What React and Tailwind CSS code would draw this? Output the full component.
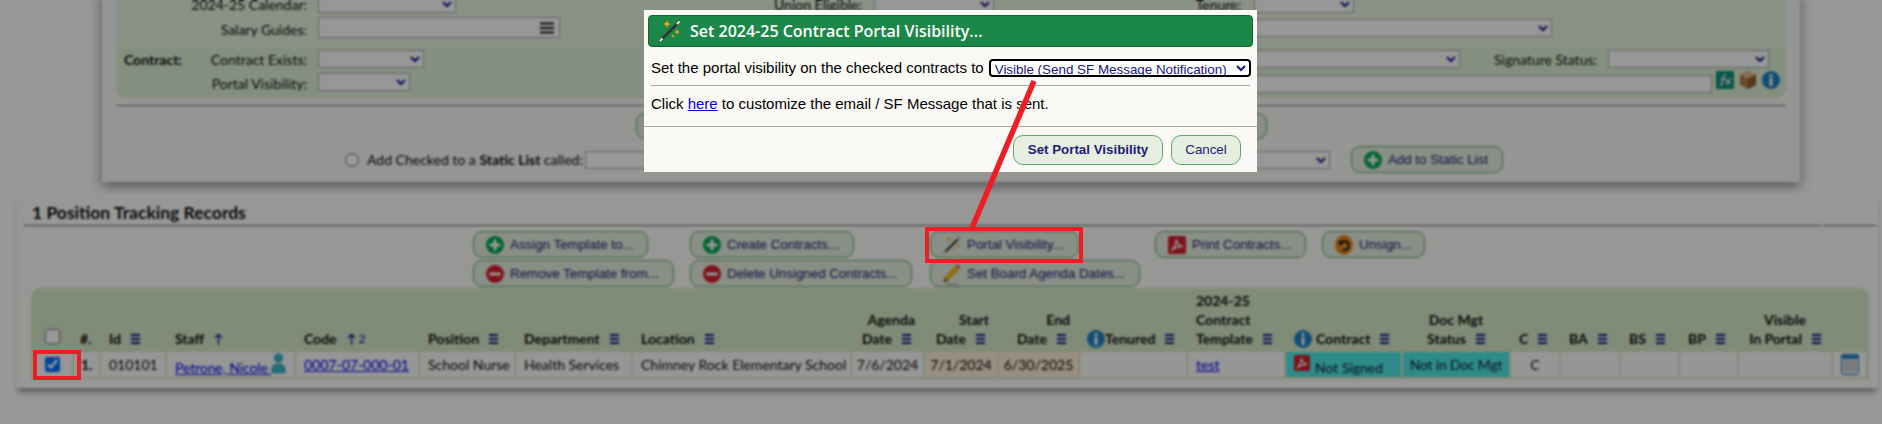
import React from "react";

const Plus = () => (
  <svg width="18" height="18" viewBox="0 0 18 18" className="shrink-0">
    <circle cx="9" cy="9" r="9" fill="#00a651" />
    <path d="M9 3.500v11M3.500 9h11" stroke="#fff" strokeWidth="3" />
  </svg>
);
const Minus = () => (
  <svg width="18" height="18" viewBox="0 0 18 18" className="shrink-0">
    <circle cx="9" cy="9" r="9" fill="#d4202a" />
    <path d="M3.500 9h11" stroke="#fff" strokeWidth="3" />
  </svg>
);
const Pdf = ({ s = 16 }) => (
  <svg width={s} height={s} viewBox="0 0 16 16" className="shrink-0">
    <rect width="16" height="16" rx="1.500" fill="#d0202a" />
    <path d="M3 13c2-1.500 3.500-4.500 4.500-10 .5 4 2.500 6 6 6.500-3-.5-7 .5-10.500 3.500z" fill="none" stroke="#fff" strokeWidth="1.200" />
  </svg>
);
const Undo = () => (
  <svg width="18" height="20" viewBox="0 0 18 20" className="shrink-0">
    <ellipse cx="9" cy="10" rx="9" ry="10" fill="#e58a1f" />
    <path d="M6 7.500a4.500 4.500 0 1 1 1 7" fill="none" stroke="#111" strokeWidth="2" />
    <path d="M3.500 5.500l.5 5 4.500-1.500z" fill="#111" />
  </svg>
);
const Wand = ({ s = 22 }) => (
  <svg width={s} height={s} viewBox="0 0 22 22" className="shrink-0">
    <path d="M1.500 20.500L20 2" stroke="#333" strokeWidth="2.600" strokeLinecap="round" />
    <path d="M1.500 20.500l1.500-1.500M18.500 3.500L20 2" stroke="#eee" strokeWidth="2" strokeLinecap="round" />
    <path d="M8 0l1 3 3 1-3 1-1 3-1-3-3-1 3-1zM18 9l.8 2.200 2.200.8-2.200.8-.8 2.200-.8-2.200-2.200-.8 2.200-.8z" fill="#f5a623" />
    <path d="M14 14l.5 1.500 1.500.5-1.500.5-.5 1.500-.5-1.500-1.500-.5 1.500-.5z" fill="#f5a623" />
  </svg>
);
const Pencil = () => (
  <svg width="18" height="26" viewBox="0 0 20 26" className="shrink-0">
    <path d="M2 17L14 4l4 3L6 20l-5 2z" fill="#f4c20d" stroke="#a9851a" strokeWidth=".7" />
    <path d="M14 4l1.500-2 4 3L18 7z" fill="#ec4f9c" />
    <path d="M1 22l1.500-4 3 2z" fill="#444" />
    <path d="M3 24h14M5 25.500h12" stroke="#aaa" strokeWidth="1" />
  </svg>
);
const Info = ({ s = 18 }) => (
  <svg width={s} height={s} viewBox="0 0 18 18" className="shrink-0">
    <circle cx="9" cy="9" r="9" fill="#1d83c4" />
    <circle cx="9" cy="4.500" r="1.600" fill="#fff" />
    <rect x="7.600" y="7" width="2.800" height="8" fill="#fff" />
  </svg>
);
const Fx = () => (
  <svg width="18" height="18" viewBox="0 0 18 21" preserveAspectRatio="none" className="shrink-0">
    <rect width="18" height="21" rx="1.500" fill="#0c8f78" />
    <path d="M4 17c2 0 2-2 2.500-5.500S7.500 4 10 4M4.500 9.500H9M9.500 9l5 6.500M15 9l-5.500 6.500" fill="none" stroke="#fff" strokeWidth="1.300" />
  </svg>
);
const Cube = () => (
  <svg width="16" height="18" viewBox="0 0 17 21" preserveAspectRatio="none" className="shrink-0">
    <path d="M8.500 0L17 4.500v11.500L8.500 21 0 16V4.500z" fill="#b87a45" />
    <path d="M8.500 0L17 4.500 8.500 9 0 4.500z" fill="#e0b589" />
    <path d="M8.500 9L17 4.500v11.500L8.500 21z" fill="#8f5a2c" />
  </svg>
);
const Bars = () => (
  <svg width="9" height="10" viewBox="0 0 9 10" className="shrink-0">
    <path d="M0 1h9M0 5h9M0 9h9" stroke="#14148c" strokeWidth="2" />
  </svg>
);
const Up = () => (
  <svg width="9" height="12" viewBox="0 0 9 12" className="shrink-0">
    <path d="M4.500 12V1.500M1 5l3.500-3.500L8 5" fill="none" stroke="#14148c" strokeWidth="1.300" />
  </svg>
);
const Person = () => (
  <svg width="15" height="21" viewBox="0 0 15 21" className="shrink-0">
    <circle cx="7.500" cy="5" r="4.700" fill="#3bb4c9" />
    <path d="M0 19c0-6 3-8.500 7.500-8.500S15 13 15 19c0 2-15 2-15 0z" fill="#3bb4c9" />
  </svg>
);
const Cal = () => (
  <svg width="18" height="21" viewBox="0 0 18 21">
    <rect x=".5" y=".5" width="17" height="20" rx="1.500" fill="#e5eef5" stroke="#2b7fb8" />
    <rect x="1" y="1" width="16" height="4" fill="#2b87c4" />
    <path d="M1 8.500h16M1 12h16M1 15.500h16M5 5v15M9 5v15M13 5v15" stroke="#9a9a9a" strokeWidth=".8" />
  </svg>
);

const selectBase = "border border-[#a8a8a8] bg-[#fcfcfc] text-[#14148c] h-[18px] text-[13px] shrink-0";
const Sel = ({ className }) => (
  <select className={`${selectBase} ${className}`} defaultValue="">
    <option value=""></option>
  </select>
);

const Btn = ({ icon, children, className = "" }) => (
  <button className={`inline-flex h-[27px] items-center gap-[6px] rounded-[9px] border border-[#5cab6c] bg-[#e6eee0] pl-3 pr-[14px] text-[13.333px] text-[#1c1c78] whitespace-nowrap font-['Liberation_Sans',sans-serif] ${className}`}>
    {icon}
    <span>{children}</span>
  </button>
);

const Head = ({ lines = [], label, icon, align = "left", className = "", pre }) => (
  <div className={`flex flex-col justify-end text-[14px] font-bold leading-[19px] pb-[4px] ${align === "right" ? "items-end pr-2" : align === "center" ? "items-center" : "items-start pl-2"} ${className}`}>
    {lines.map((l) => (
      <div key={l}>{l}</div>
    ))}
    <div className={`flex items-center gap-[10px] whitespace-nowrap ${align === "right" ? "pr-[4px]" : ""}`}>
      {pre}
      <span>{label}</span>
      {icon === undefined ? <Bars /> : icon}
    </div>
  </div>
);

const Cell = ({ children, className = "" }) => (
  <div className={`h-[25px] flex items-center whitespace-nowrap text-[14px] bg-[#fbfbfb] ${className}`}>{children}</div>
);

const Link = ({ children }) => <span className="text-[#0000ee] underline">{children}</span>;

export default function App() {
  return (
    <div className="relative h-[424px] w-full overflow-hidden bg-[#fdfdfd] text-[#111] font-['Lato',sans-serif] text-[14px]">
      {/* search panel */}
      <div className="-mt-[8px] ml-[102px] h-[190px] w-[1698px] bg-[#f9f9f6] px-[14px] pt-[3px] shadow-[0_4px_12px_rgba(0,0,0,0.45)]">
        <div className="h-[103px] rounded-b-[10px] bg-[#e6f3df]">
          <div className="flex h-[18px] items-center">
            <div className="w-[191px] text-right">2024-25 Calendar:</div>
            <Sel className="ml-[11px] w-[138px]" />
            <div className="w-[406px] text-right">Union Eligible:</div>
            <Sel className="ml-3 w-[120px]" />
            <div className="w-[247px] text-right">Tenure:</div>
            <Sel className="ml-[13px] w-[100px]" />
          </div>
          <div className="mt-1 flex h-[21px] items-center">
            <div className="w-[191px] pt-[3px] text-right">Salary Guides:</div>
            <div className="ml-[11px] flex h-[21px] w-[242px] items-center justify-end border border-[#a8a8a8] bg-[#fcfcfc] pr-[5px]">
              <svg width="14" height="12" viewBox="0 0 14 12"><path d="M0 1.500h14M0 6h14M0 10.500h14" stroke="#111" strokeWidth="2" /></svg>
            </div>
            <Sel className="ml-[440px] w-[552px]" />
          </div>
          <div className="mt-[9px] h-[51px] rounded-b-[10px] bg-[#dcefd4] pt-[3px]">
            <div className="flex h-[18px] items-center">
              <div className="flex w-[191px] justify-between pl-2">
                <b>Contract:</b>
                <span>Contract Exists:</span>
              </div>
              <Sel className="ml-[11px] w-[106px]" />
              <Sel className="ml-[576px] w-[460px]" />
              <div className="w-[137px] text-right">Signature Status:</div>
              <Sel className="ml-[11px] w-[161px]" />
            </div>
            <div className="mt-[5px] flex h-[20px] items-start">
              <div className="w-[191px] text-right">Portal Visibility:</div>
              <Sel className="ml-[11px] w-[92px]" />
              <div className="ml-[590px] mt-[2px] h-[18px] w-[712px] shrink-0 border border-[#a8a8a8] bg-[#fcfcfc]" />
              <div className="ml-1 -mt-[2px] flex items-center gap-[6px]">
                <Fx />
                <Cube />
                <Info />
              </div>
            </div>
          </div>
        </div>
        <div className="mt-[7px] h-[1px] bg-[#777]" />
        <div className="ml-[520px] mt-[7px] h-[26px] w-[631px] rounded-[9px] border border-[#5cab6c] bg-[#e6eee0]" />
        <div className="mt-[7px] flex h-[27px] items-center">
          <input type="radio" className="ml-[229px] h-[14px] w-[14px]" />
          <span className="ml-2 whitespace-nowrap">Add Checked to a <b>Static List</b> called:</span>
          <Sel className="ml-[2px] w-[745px]" />
          <Btn icon={<Plus />} className="ml-[21px]">Add to Static List</Btn>
        </div>
      </div>

      {/* results panel */}
      <div className="ml-[16px] mt-[11px] h-[195px] w-[1862px] bg-[#fcfcfa] pt-[8px] shadow-[0_6px_6px_-2px_rgba(0,0,0,0.4)]">
        <div className="ml-2 flex h-[25px] w-[1852px]">
          <div className="w-[1797px] border-b border-[#666] pl-2 text-[17.5px] font-bold leading-[24px]">1 Position Tracking Records</div>
          <div className="ml-[2px] flex-1 border-b border-[#666]" />
        </div>
        <div className="ml-[457px] mt-[5px] grid grid-cols-[217px_240px_225px_167px_auto] justify-start gap-y-[2px]">
          <div className="flex flex-col items-start gap-[2px]">
            <Btn icon={<Plus />}>Assign Template to...</Btn>
            <Btn icon={<Minus />}>Remove Template from...</Btn>
          </div>
          <div className="flex flex-col items-start gap-[2px]">
            <Btn icon={<Plus />}>Create Contracts...</Btn>
            <Btn icon={<Minus />}>Delete Unsigned Contracts...</Btn>
          </div>
          <div className="flex flex-col items-start gap-[2px]">
            <Btn icon={<Wand s={18} />}>Portal Visibility...</Btn>
            <Btn icon={<Pencil />}>Set Board Agenda Dates...</Btn>
          </div>
          <div><Btn icon={<Pdf s={18} />}>Print Contracts...</Btn></div>
          <div><Btn icon={<Undo />} className="!pr-[12px]">Unsign...</Btn></div>
        </div>

        <div className="ml-[15px] mt-[1px] w-[1838px] rounded-t-[10px] bg-[#d6e8c8] pb-[2px] pl-[2px]">
          <div className="grid h-[64px] grid-cols-[39px_25px_64px_127px_122px_94px_115px_217px_71px_72px_79px_106px_96px_115px_106px_48px_58px_57px_57px_92px_33px] gap-x-[2px]">
            <div className="flex items-end justify-center pb-[8px]">
              <input type="checkbox" className="h-[15px] w-[15px]" />
            </div>
            <Head label="#." icon={null} className="!pl-[6px]" />
            <Head label="Id" />
            <Head label="Staff" icon={<Up />} />
            <Head label="Code" icon={<span className="flex items-center gap-[3px] font-normal text-[#14148c] text-[12px]"><Up />2</span>} />
            <Head label="Position" />
            <Head label="Department" />
            <Head label="Location" />
            <Head lines={["Agenda"]} label="Date" align="right" />
            <Head lines={["Start"]} label="Date" align="right" />
            <Head lines={["End"]} label="Date" align="right" />
            <Head label="Tenured" className="!pl-[7px]" pre={<span className="-mr-[10px]"><Info /></span>} />
            <Head lines={["2024-25", "Contract"]} label="Template" />
            <Head label="Contract" pre={<span className="-mr-[6px]"><Info /></span>} />
            <Head lines={["Doc Mgt"]} label="Status" align="center" />
            <Head label="C" />
            <Head label="BA" />
            <Head label="BS" />
            <Head label="BP" />
            <Head lines={["Visible"]} label="In Portal" align="center" />
            <div />
          </div>
          <div className="grid grid-cols-[39px_25px_64px_127px_122px_94px_115px_217px_71px_72px_79px_106px_96px_115px_106px_48px_58px_57px_57px_92px_33px] gap-x-[2px]">
            <Cell className="justify-center">
              <input type="checkbox" defaultChecked className="h-[15px] w-[15px]" />
            </Cell>
            <Cell className="font-bold pl-[7px]">1.</Cell>
            <Cell className="pl-2">010101</Cell>
            <Cell className="pl-2 items-start">
              <span className="mt-[5px] tracking-[-0.1px]"><Link>Petrone, Nicole&nbsp;</Link></span>
              <span className="mt-[1px]"><Person /></span>
            </Cell>
            <Cell className="pl-2"><Link>0007-07-000-01</Link></Cell>
            <Cell className="pl-2">School Nurse</Cell>
            <Cell className="pl-2">Health Services</Cell>
            <Cell className="pl-2">Chimney Rock Elementary School</Cell>
            <Cell className="justify-center text-[13.3px]">7/6/2024</Cell>
            <Cell className="justify-center !bg-[#ffefd5] text-[13.3px]">7/1/2024</Cell>
            <Cell className="justify-center !bg-[#ffefd5] text-[13.3px]">6/30/2025</Cell>
            <Cell />
            <Cell className="pl-2"><Link>test</Link></Cell>
            <Cell className="!bg-[#4fe8e4] pl-2 items-start">
              <span className="mt-[3px]"><Pdf /></span>
              <span className="ml-[5px] mt-[5px] text-[#112244]">Not Signed</span>
            </Cell>
            <Cell className="justify-center !bg-[#4fe8e4] text-[#112244] tracking-[-0.2px]">Not in Doc Mgt</Cell>
            <Cell className="justify-center">C</Cell>
            <Cell />
            <Cell />
            <Cell />
            <Cell />
            <Cell className="justify-center"><Cal /></Cell>
          </div>
        </div>
      </div>

      {/* dim layer */}
      <div className="absolute inset-0 bg-black/40 backdrop-blur-[1px]" />

      {/* dialog */}
      <div className="absolute left-[644px] top-[10px] h-[162px] w-[613px] bg-[#fbf9f6] font-['Liberation_Sans',sans-serif] text-[15px] text-black">
        <div className="mx-[4px] mt-[5px] flex h-[32px] items-center gap-[9px] rounded-[4px] border border-[#14643a] bg-[#1b8748] pl-[10px] font-['Open_Sans',sans-serif] text-[16px] font-semibold text-white">
          <Wand />
          <span>Set 2024-25 Contract Portal Visibility...</span>
        </div>
        <div className="mx-[7px] mt-[12px] flex h-[18px] items-center">
          <span className="whitespace-nowrap">Set the portal visibility on the checked contracts to</span>
          <select defaultValue="v" className="ml-[5px] h-[18px] w-[262px] shrink-0 rounded-[4px] border-2 border-black bg-white text-[13.4px] text-[#14148c]">
            <option value="v">Visible (Send SF Message Notification)</option>
          </select>
        </div>
        <div className="mx-[7px] mt-[8px] h-[1px] bg-[#a9a7a6]" />
        <div className="mx-[7px] mt-[9px] leading-[17px]">Click <Link>here</Link> to customize the email / SF Message that is sent.</div>
        <div className="mt-[14px] h-[1px] bg-[#a9a7a6]" />
        <div className="mr-[16px] mt-[8px] flex justify-end gap-2">
          <button className="h-[30px] w-[150px] rounded-[10px] border border-[#5cab6c] bg-[#e6eee0] text-[13.333px] font-bold text-[#1c1c78]">Set Portal Visibility</button>
          <button className="h-[30px] w-[70px] rounded-[10px] border border-[#5cab6c] bg-[#e6eee0] text-[13.333px] text-[#1c1c78]">Cancel</button>
        </div>
      </div>

      {/* annotations */}
      <svg className="pointer-events-none absolute inset-0" width="1882" height="424">
        <path d="M1034 81L972 228" stroke="#ee1c25" strokeWidth="5.500" />
      </svg>
      <div className="absolute left-[925px] top-[227px] h-[36px] w-[158px] border-4 border-[#ee1c25]" />
      <div className="absolute left-[33px] top-[350px] h-[30px] w-[48px] border-4 border-[#ee1c25]" />
    </div>
  );
}
